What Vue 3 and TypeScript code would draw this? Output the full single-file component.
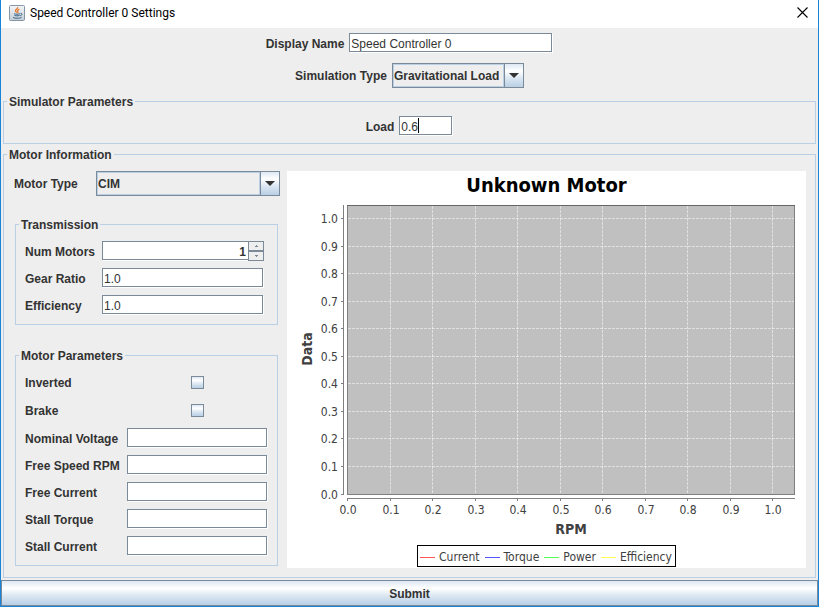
<script setup lang="ts">
import { ref } from 'vue'

interface MotorParameter {
  id: string
  label: string
  value: string
}

interface Series {
  name: string
  color: string
}

const displayName = ref('Speed Controller 0')
const simulationType = ref('Gravitational Load')
const load = ref('0.6')
const motorType = ref('CIM')
const numMotors = ref(1)
const gearRatio = ref('1.0')
const efficiency = ref('1.0')
const inverted = ref(false)
const brake = ref(false)

const parameters = ref<MotorParameter[]>([
  { id: 'nominal-voltage', label: 'Nominal Voltage', value: '' },
  { id: 'free-speed', label: 'Free Speed RPM', value: '' },
  { id: 'free-current', label: 'Free Current', value: '' },
  { id: 'stall-torque', label: 'Stall Torque', value: '' },
  { id: 'stall-current', label: 'Stall Current', value: '' },
])

const series: Series[] = [
  { name: 'Current', color: '#ff5555' },
  { name: 'Torque', color: '#5555ff' },
  { name: 'Power', color: '#55ff55' },
  { name: 'Efficiency', color: '#ffff55' },
]

// Plot area inside the chart's own coordinate system
const plot = { left: 60, top: 6, right: 507, bottom: 295 }

const ticks = Array.from({ length: 11 }, (_, i) => ({
  label: (i / 10).toFixed(1),
  x: Math.round(plot.left + i * 42.52),
  y: Math.floor(plot.bottom - i * 27.55),
}))
const innerTicks = ticks.slice(1)

function step(delta: number) {
  numMotors.value = Math.max(1, numMotors.value + delta)
}
</script>

<template>
  <form class="window" @submit.prevent>
    <header class="titlebar">
      <svg class="app-icon" viewBox="0 0 16 16" aria-hidden="true">
        <defs>
          <linearGradient id="icon-face" x1="0" y1="0" x2="0" y2="1">
            <stop offset="0" stop-color="#f4f6f8" />
            <stop offset="1" stop-color="#c3cdd6" />
          </linearGradient>
        </defs>
        <rect x="0.5" y="0.5" width="15" height="15" rx="1" fill="url(#icon-face)" stroke="#8796a5" />
        <path d="M8.6 2c1 1.400-2.600 2.300-2.100 3.800.2.700.8 1.100 1 1.900M10.300 4.200C8.700 5 8.200 5.600 8.800 6.500c.4.600.2 1.100-.3 1.500" fill="none" stroke="#e8762c" stroke-width="1.300" />
        <path d="M5 8.800c1.500.6 4.500.6 6 0M5.500 10.500c1.400.5 3.600.5 5 0M4 12.500c2 1 6.500 1 8.500-.1M11.500 8.500c2-.5 2.200 1.500-.3 2.200" fill="none" stroke="#3f6788" stroke-width="1" />
      </svg>
      <h1 class="window-title">Speed Controller 0 Settings</h1>
      <button class="close" type="button" aria-label="Close">
        <svg viewBox="0 0 11 11" aria-hidden="true">
          <path d="M0.500 0.500L10.500 10.500M10.500 0.500L0.500 10.500" fill="none" stroke="#000" stroke-width="1.100" />
        </svg>
      </button>
    </header>

    <div class="general">
      <div class="line">
        <label for="display-name">Display Name</label>
        <input id="display-name" v-model="displayName" class="field name-field" type="text" />
      </div>
      <div class="line">
        <label for="simulation-type">Simulation Type</label>
        <span class="combo simulation-combo">
          <select id="simulation-type" v-model="simulationType">
            <option>Gravitational Load</option>
          </select>
          <span class="combo-button">
            <svg viewBox="0 0 10 5" aria-hidden="true"><path d="M0 0H10L5 5Z" fill="#333" /></svg>
          </span>
        </span>
      </div>
    </div>

    <fieldset class="group">
      <legend>Simulator Parameters</legend>
      <div class="line load-line">
        <label for="load">Load</label>
        <span class="load-box">
          <input id="load" v-model="load" class="field load-field" type="text" />
          <span class="caret"></span>
        </span>
      </div>
    </fieldset>

    <fieldset class="group">
      <legend>Motor Information</legend>
      <div class="motor">
        <div class="settings">
          <div class="motor-type">
            <label for="motor-type">Motor Type</label>
            <span class="combo">
              <select id="motor-type" v-model="motorType">
                <option>CIM</option>
              </select>
              <span class="combo-button">
                <svg viewBox="0 0 10 5" aria-hidden="true"><path d="M0 0H10L5 5Z" fill="#333" /></svg>
              </span>
            </span>
          </div>

          <fieldset class="subgroup">
            <legend>Transmission</legend>
            <div class="rows transmission">
              <label for="num-motors">Num Motors</label>
              <div class="spinner">
                <input id="num-motors" v-model.number="numMotors" class="field" type="number" min="1" />
                <span class="spin-buttons">
                  <button type="button" aria-label="Increase" @click="step(1)">
                    <svg viewBox="0 0 3 2" aria-hidden="true"><path d="M1 0h1v1h1v1H0V1h1z" fill="#7a8a99" /></svg>
                  </button>
                  <button type="button" aria-label="Decrease" @click="step(-1)">
                    <svg viewBox="0 0 3 2" aria-hidden="true"><path d="M0 0h3v1H2v1H1V1H0z" fill="#7a8a99" /></svg>
                  </button>
                </span>
              </div>
              <label for="gear-ratio">Gear Ratio</label>
              <input id="gear-ratio" v-model="gearRatio" class="field" type="text" />
              <label for="efficiency">Efficiency</label>
              <input id="efficiency" v-model="efficiency" class="field" type="text" />
            </div>
          </fieldset>

          <fieldset class="subgroup parameters">
            <legend>Motor Parameters</legend>
            <div class="rows parameter-rows">
              <label class="check-label" for="inverted">Inverted</label>
              <input id="inverted" v-model="inverted" class="check" type="checkbox" />
              <label class="check-label" for="brake">Brake</label>
              <input id="brake" v-model="brake" class="check" type="checkbox" />
              <template v-for="item in parameters" :key="item.id">
                <label :for="item.id">{{ item.label }}</label>
                <input :id="item.id" v-model="item.value" class="field" type="text" />
              </template>
            </div>
          </fieldset>
        </div>

        <section class="chart">
          <h2>Unknown Motor</h2>
          <svg class="plot" viewBox="0 0 519 340" role="img" aria-label="Data by RPM">
            <rect x="60.5" y="6.5" width="447" height="289" fill="#c0c0c0" stroke="#7f7f7f" />
            <g class="grid">
              <line v-for="t in innerTicks" :key="'gx' + t.label" :x1="t.x + 0.5" :x2="t.x + 0.5" y1="7" y2="295" />
              <line v-for="t in innerTicks" :key="'gy' + t.label" x1="61" x2="507" :y1="t.y + 0.5" :y2="t.y + 0.5" />
            </g>
            <path d="M60 6.500H508" stroke="#666" />
            <g class="axis">
              <path d="M56.500 6V296M60 299.500H508" />
              <line v-for="t in ticks" :key="'tx' + t.label" :x1="t.x + 0.5" :x2="t.x + 0.5" y1="300" y2="302" />
              <line v-for="t in ticks" :key="'ty' + t.label" x1="54" x2="56" :y1="t.y + 0.5" :y2="t.y + 0.5" />
            </g>
            <g class="tick-text">
              <text v-for="t in ticks" :key="'lx' + t.label" :x="t.x + 1" y="315" text-anchor="middle">{{ t.label }}</text>
              <text v-for="t in ticks" :key="'ly' + t.label" x="51" :y="t.y + 5" text-anchor="end">{{ t.label }}</text>
            </g>
            <text class="axis-name" x="284" y="335" text-anchor="middle">RPM</text>
            <text class="axis-name" transform="translate(25 150) rotate(-90)" text-anchor="middle">Data</text>
          </svg>
          <ul class="legend">
            <li v-for="s in series" :key="s.name">
              <svg viewBox="0 0 15 1" aria-hidden="true"><rect width="15" height="1" :fill="s.color" /></svg>
              <span>{{ s.name }}</span>
            </li>
          </ul>
        </section>
      </div>
    </fieldset>

    <button class="submit" type="submit">Submit</button>
  </form>
</template>

<style>
body {
  margin: 0;
  background: #eee;
}
</style>

<style scoped>
* {
  box-sizing: border-box;
}

.window {
  display: flex;
  flex-direction: column;
  min-height: 100vh;
  border: 1px solid #1883d7;
  border-top: 0;
  background: #eee;
  color: #333;
  font: bold 12px/15px "Liberation Sans", Arial, sans-serif;
}

input,
select,
button {
  margin: 0;
  border-radius: 0;
  font: inherit;
  color: inherit;
  outline: 0;
}

label {
  padding-top: 2px;
  white-space: nowrap;
}

.titlebar {
  display: flex;
  align-items: center;
  height: 28px;
  padding: 0 10px 3px 8px;
  background: #fff;
}

.app-icon {
  width: 16px;
  height: 16px;
}

.window-title {
  flex: 1;
  margin: 0 0 0 5px;
  color: #000;
  font: 12px/16px Roboto, "Noto Sans", sans-serif;
}

.close {
  display: flex;
  padding: 0;
  border: 0;
  background: none;
}

.close svg {
  width: 11px;
  height: 11px;
}

.general {
  display: flex;
  flex-direction: column;
  gap: 10px;
  padding: 5px 0;
}

.line {
  display: flex;
  justify-content: center;
  align-items: center;
  gap: 5px;
}

.field {
  display: block;
  width: calc(100% - 1px);
  min-width: 0;
  height: 19px;
  margin: 0 1px 1px 0;
  padding: 2px 1px 0;
  border: 1px solid #7a8a99;
  background: #fff;
  box-shadow: 1px 1px 0 #fff;
  font-weight: normal;
}

.name-field {
  width: 203px;
}

.load-box {
  position: relative;
}

.load-field {
  width: 53px;
}

.caret {
  position: absolute;
  top: 2px;
  left: 19px;
  width: 1px;
  height: 15px;
  background: #000;
}

.combo {
  display: grid;
  grid-template-columns: 1fr 20px;
  height: 25px;
}

.simulation-combo {
  width: 132px;
}

.combo select {
  grid-area: 1 / 1 / 2 / 3;
  width: 100%;
  padding: 2px 20px 0 1px;
  appearance: none;
  border: 1px solid #7a8a99;
  background: #eee;
  box-shadow: inset 0 0 0 1px #b8cfe5;
}

.combo-button {
  grid-area: 1 / 2 / 2 / 3;
  display: flex;
  align-items: center;
  justify-content: center;
  margin: 1px 1px 1px 0;
  border-left: 1px solid #7a8a99;
  background: linear-gradient(#dde8f3, #fff 30%, #dde8f3 60%, #b8cfe5);
  box-shadow: -1px 0 0 #b8cfe5;
  pointer-events: none;
}

.combo-button svg {
  width: 10px;
  height: 5px;
}

fieldset {
  min-width: 0;
  border: 1px solid #b8cfe5;
}

legend {
  padding: 2px 2px 0;
}

.group {
  margin: 0 2px 2px;
  padding: 0 9px 9px 3px;
}

.load-line {
  padding: 6px 0 0 6px;
}

.group:has(.load-line) {
  padding-bottom: 7px;
}

.motor {
  display: flex;
  gap: 7px;
  padding: 8px 0 0 7px;
}

.settings {
  flex: 0 0 266px;
}

.motor-type {
  display: grid;
  grid-template-columns: 82px 1fr;
  align-items: center;
  margin-bottom: 20px;
}

.subgroup {
  margin: 0 2px 0 1px;
  padding: 8px 9px 9px 3px;
}

.parameters {
  margin-top: 22px;
}

.rows {
  display: grid;
  align-items: center;
  gap: 7px 0;
  padding-left: 6px;
}

.transmission {
  grid-template-columns: 77px 1fr;
  padding-right: 4px;
}

.parameter-rows {
  grid-template-columns: 102px 1fr;
}

.check-label {
  line-height: 19px;
}

.check {
  justify-self: center;
  width: 13px;
  height: 13px;
  appearance: none;
  border: 1px solid #7a8a99;
  background: linear-gradient(#dde8f3, #fff 30%, #dde8f3 60%, #b8cfe5);
}

.check:checked {
  background: #7a8a99;
}

.spinner {
  display: flex;
}

.spinner .field {
  flex: 1;
  margin-right: 0;
  padding-right: 2px;
  border-right: 0;
  font-weight: bold;
  text-align: right;
  appearance: textfield;
}

.spinner .field::-webkit-inner-spin-button {
  display: none;
}

.spin-buttons {
  display: flex;
  flex-direction: column;
  width: 16px;
}

.spin-buttons button {
  display: flex;
  align-items: center;
  justify-content: center;
  height: 10px;
  padding: 0;
  border: 1px solid #7a8a99;
  background: #eee;
}

.spin-buttons svg {
  width: 3px;
  height: 2px;
}

.chart {
  flex: 1;
  min-width: 0;
  padding-bottom: 1px;
  background: #fff;
  color: #404040;
  font: 12px/16px "DejaVu Sans Condensed", "DejaVu Sans", sans-serif;
}

.chart h2 {
  margin: 0;
  color: #000;
  font-size: 20px;
  line-height: 28px;
  text-align: center;
}

.plot {
  display: block;
  width: 100%;
}

.grid line {
  stroke: #fff;
  stroke-opacity: 0.5;
  stroke-dasharray: 3 1;
}

.axis {
  fill: none;
  stroke: #7f7f7f;
}

.tick-text {
  fill: #404040;
  font-size: 12px;
}

.axis-name {
  fill: #404040;
  font-size: 14px;
  font-weight: bold;
}

.legend {
  display: flex;
  gap: 5px;
  width: fit-content;
  margin: 6px auto 0;
  padding: 3px 3px 1px 2px;
  border: 1px solid #000;
  list-style: none;
}

.legend li {
  display: flex;
  align-items: center;
  gap: 4px;
}

.legend svg {
  width: 15px;
  height: 1px;
}

.submit {
  height: 26px;
  padding: 2px 0 0;
  border: 1px solid #7a8a99;
  background: linear-gradient(#dde8f3, #fff 30%, #dde8f3 60%, #b8cfe5);
}
</style>
